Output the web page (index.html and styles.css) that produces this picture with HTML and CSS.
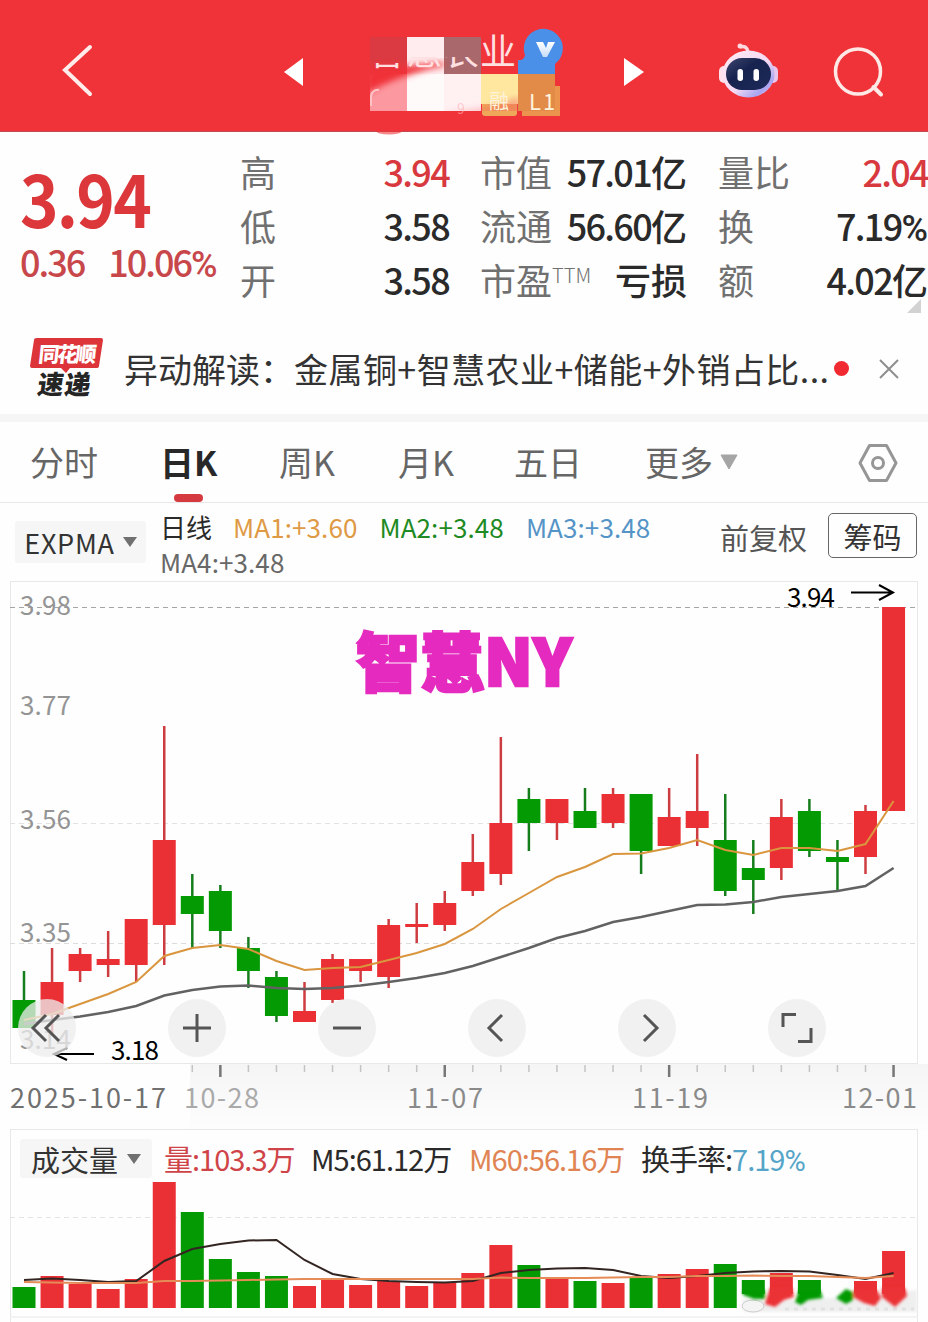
FILE: index.html
```
<!DOCTYPE html>
<html lang="zh-CN">
<head>
    <meta charset="UTF-8">
    <meta name="viewport" content="width=device-width, initial-scale=1.0">
    <title>智慧农业 日K</title>
    <link rel="stylesheet" href="styles.css">
</head>
<body>
    <header class="topbar">
        <svg class="back" width="34" height="56" viewBox="60 42 34 56"><path d="M90 47 L65 70 L90 94" fill="none" stroke="#ffeceb" stroke-width="4" stroke-linecap="round"/></svg>
        <svg class="prev" width="20" height="30" viewBox="0 0 20 30"><path d="M19 1 V29 L0 15 Z" fill="#fff"/></svg>
        <svg class="stock-name" width="206" height="112" viewBox="364 24 206 112">
            <defs>
                <filter id="soft"><feGaussianBlur stdDeviation="3"/></filter>
                <linearGradient id="fade" x1="0" y1="0" x2="0" y2="1">
                    <stop offset="0" stop-color="#fff"/>
                    <stop offset="1" stop-color="#fff" stop-opacity=".7"/>
                </linearGradient>
                <clipPath id="tiles"><rect x="370" y="37" width="148" height="74"/></clipPath>
                <clipPath id="nameBottom"><path d="M364 63H405V57H479V30H520V72H364Z"/></clipPath>
            </defs>
            <ellipse cx="389" cy="131" rx="13" ry="3.500" fill="#f03339" opacity=".6"/>
            <rect x="370" y="37" width="37" height="37" fill="#dc3a42"/>
            <rect x="407" y="37" width="37" height="37" fill="#feecee"/>
            <rect x="444" y="37" width="37" height="37" fill="#a9686b"/>
            <rect x="370" y="74" width="37" height="37" fill="#fc99a0"/>
            <rect x="407" y="74" width="37" height="37" fill="#fffafa"/>
            <rect x="444" y="74" width="37" height="37" fill="#fff0f2"/>
            <rect x="482" y="86" width="35" height="30" rx="3" fill="#efa75a"/>
            <rect x="481" y="74" width="37" height="30" fill="#ffe7a0"/>
            <rect x="522" y="86" width="38" height="30" fill="#ec944d"/>
            <rect x="518" y="74" width="37" height="37" fill="#e28b49"/>
            <g clip-path="url(#tiles)">
                <path d="M366 66 H404 L444 62 V66 C420 70 390 80 366 94 Z" fill="#f03339" filter="url(#soft)"/>
                <path d="M440 114 H520 V96 L505 102 L480 109 Z" fill="#f2545a" opacity=".4" filter="url(#soft)"/>
            </g>
            <path d="M371 106V96q2-7 8-6" fill="none" stroke="#ffc2c4" stroke-width="2"/>
            <text x="369" y="65" class="title" clip-path="url(#nameBottom)" textLength="147">智慧农业</text>
            <text x="489" y="109" class="tag">融</text>
            <text x="529" y="110" class="tag level">L1</text>
            <text x="457" y="114" class="tag faint">9</text>
            <path d="M518 74V60q6 1 7-5a19.500 19.500 0 1 1 30 9v10Z" fill="#4a90e8"/>
            <path d="M536 42h7l3 6 2-6h7l-8 15h-4Z" fill="url(#fade)"/>
        </svg>
        <svg class="next" width="20" height="30" viewBox="0 0 20 30"><path d="M0 1 V29 L20 15 Z" fill="#fff"/></svg>
        <svg class="robot" width="62" height="58" viewBox="717 42 62 58">
            <defs>
                <linearGradient id="shell" x1="0" y1="0" x2="1" y2="1">
                    <stop offset="0" stop-color="#ffeaf4"/>
                    <stop offset=".55" stop-color="#f4d9f3"/>
                    <stop offset=".8" stop-color="#a7a5f2"/>
                    <stop offset="1" stop-color="#f5c9ea"/>
                </linearGradient>
                <linearGradient id="visor" x1="0" y1="0" x2="1" y2="1">
                    <stop offset="0" stop-color="#3d4670"/>
                    <stop offset=".4" stop-color="#17234e"/>
                    <stop offset="1" stop-color="#1d2a59"/>
                </linearGradient>
            </defs>
            <path d="M740 47 Q747 45 748 52" fill="none" stroke="#ffd9dd" stroke-width="3.500"/>
            <circle cx="740" cy="46" r="2.500" fill="#ffd9dd"/>
            <rect x="719" y="66" width="10" height="17" rx="5" fill="#ffe1ec"/>
            <rect x="768" y="66" width="10" height="17" rx="5" fill="#e9c5ee"/>
            <ellipse cx="748.500" cy="74" rx="26" ry="23.500" fill="url(#shell)"/>
            <rect x="726" y="58" width="45" height="32" rx="16" fill="url(#visor)"/>
            <rect x="737.500" y="69" width="5.500" height="12" rx="2.700" fill="#fff"/>
            <rect x="753.500" y="69" width="5.500" height="12" rx="2.700" fill="#fff"/>
        </svg>
        <svg class="search" width="52" height="52" viewBox="833 46 52 52"><circle cx="858" cy="71.500" r="22.500" fill="none" stroke="#ffe9e6" stroke-width="3.500"/><path d="M873.500 87 L881 94.500" stroke="#ffe9e6" stroke-width="4" stroke-linecap="round"/></svg>
    </header>

    <section class="quote">
        <div class="price">
            <div class="last">3.94</div>
            <div class="change"><span>0.36</span><span>10.06<i class="pct">%</i></span></div>
        </div>
        <dl class="col high-low">
            <dt>高</dt><dd class="up">3.94</dd>
            <dt>低</dt><dd>3.58</dd>
            <dt>开</dt><dd>3.58</dd>
        </dl>
        <dl class="col cap">
            <dt>市值</dt><dd>57.01<i>亿</i></dd>
            <dt>流通</dt><dd>56.60<i>亿</i></dd>
            <dt>市盈<sup>TTM</sup></dt><dd><i>亏损</i></dd>
        </dl>
        <dl class="col turnover">
            <dt>量比</dt><dd class="up">2.04</dd>
            <dt>换</dt><dd>7.19<i class="pct">%</i></dd>
            <dt>额</dt><dd>4.02<i>亿</i></dd>
        </dl>
        <span class="expand"></span>
    </section>

    <section class="news">
        <svg class="news-logo" width="76" height="64" viewBox="28 336 76 64">
            <path d="M37 339 H101 q2 0 2 2 L99 367 q0 2-3 2 H70 l-4 5 -5-5 H32 q-2 0-2-2 L34 341 q0-2 3-2Z" fill="#dd3439"/>
            <text x="37" y="363" textLength="58" class="logo-top" transform="skewX(-6) translate(39 0)">同花顺</text>
            <text x="37" y="395" textLength="53" class="logo-bottom" transform="skewX(-8) translate(55 0)">速递</text>
        </svg>
        <p class="headline">异动解读：<span>金属铜+智慧农业+储能+外销占比...</span></p>
        <span class="dot"></span>
        <svg class="close" width="20" height="20" viewBox="0 0 20 20"><path d="M1 1 L19 19 M19 1 L1 19" stroke="#8e8e8e" stroke-width="2"/></svg>
    </section>

    <nav class="tabs">
        <a>分时</a>
        <a class="active">日K</a>
        <a>周K</a>
        <a>月K</a>
        <a>五日</a>
        <a class="more">更多<svg width="18" height="16" viewBox="0 0 18 16"><path d="M1 1H17L9 15Z" fill="#a5a5a5" stroke="#a5a5a5" stroke-linejoin="round"/></svg></a>
        <svg class="settings" width="40" height="40" viewBox="0 0 40 40" fill="none" stroke="#969696" stroke-width="3"><path d="M11.500 2.500 H28.500 L38 20 L28.500 37.500 H11.500 L2 20 Z" stroke-linejoin="round"/><circle cx="20" cy="20" r="5.500"/></svg>
    </nav>

    <section class="indicator">
        <button class="select">EXPMA<b class="caret"></b></button>
        <div class="ma">
            <div><span class="day">日线</span><span class="ma1">MA1:+3.60</span><span class="ma2">MA2:+3.48</span><span class="ma3">MA3:+3.48</span></div>
            <div><span class="ma4">MA4:+3.48</span></div>
        </div>
        <span class="adjust">前复权</span>
        <button class="chips">筹码</button>
    </section>

    <section class="kline">
        <svg id="kline" width="928" height="548" viewBox="0 582 928 548"></svg>
        <div class="controls">
            <button><svg viewBox="0 0 58 58"><path d="M28 16 L15 29 L28 42 M41 16 L28 29 L41 42"/></svg></button>
            <button><svg viewBox="0 0 58 58"><path d="M15 29 H43 M29 15 V43"/></svg></button>
            <button><svg viewBox="0 0 58 58"><path d="M15 29 H43"/></svg></button>
            <button><svg viewBox="0 0 58 58"><path d="M34 16 L21 29 L34 42"/></svg></button>
            <button><svg viewBox="0 0 58 58"><path d="M26 16 L39 29 L26 42"/></svg></button>
            <button><svg viewBox="0 0 58 58"><path d="M15 28 V15.500 H28 M43 29 V42.500 H30"/></svg></button>
        </div>
    </section>

    <section class="volume">
        <div class="volume-head">
            <button class="select">成交量<b class="caret"></b></button>
            <span class="vol">量:103.3万</span>
            <span class="m5">M5:61.12万</span>
            <span class="m60">M60:56.16万</span>
            <span class="rate">换手率:<em>7.19<i class="pct">%</i></em></span>
        </div>
        <svg id="volume" width="928" height="192" viewBox="0 1130 928 192"></svg>
    </section>

    <script src="chart.js"></script>
</body>
</html>
```

FILE: styles.css
```
* {
    box-sizing: border-box;
}
body {
    margin: 0;
    width: 928px;
    height: 1322px;
    overflow: hidden;
    background: #fefefe;
    color: #2a2a2a;
    font-family: "Noto Sans CJK SC", sans-serif;
}
svg {
    display: block;
    flex: none;
    overflow: visible;
}
button {
    border: none;
    padding: 0;
    font-family: inherit;
    color: inherit;
}
i, em {
    font-style: normal;
}
.pct {
    font-family: Roboto, sans-serif;
}

/* header */
.topbar {
    display: flex;
    align-items: flex-start;
    height: 132px;
    background: #f03339;
    border-bottom: 1px solid #c04a50;
}
.back {
    margin: 42px 0 0 60px;
}
.prev {
    margin: 57px 0 0 190px;
}
.stock-name {
    margin: 24px 0 0 60px;
}
.next {
    margin: 57px 0 0 54px;
}
.robot {
    margin: 42px 0 0 73px;
}
.search {
    margin: 46px 0 0 54px;
}
.title {
    font-size: 36px;
    fill: #ffdfe0;
}
.tag {
    font-size: 20px;
    fill: #fff3dc;
}
.level {
    font-size: 22px;
    letter-spacing: 2px;
}
.faint {
    fill: #ffb3b6;
    opacity: .6;
    font-size: 14px;
}

/* quote */
.quote {
    position: relative;
    display: flex;
    height: 188px;
    padding-top: 12px;
}
.price {
    width: 240px;
    padding-left: 20px;
    color: #dc373b;
}
.last {
    height: 86px;
    margin-top: 10px;
    font-size: 72px;
    line-height: 86px;
    font-weight: 700;
    letter-spacing: -2px;
    transform: scaleX(.91);
    transform-origin: left;
}
.change {
    display: flex;
    gap: 24px;
    height: 40px;
    margin-top: 1px;
    font-size: 36px;
    line-height: 40px;
    font-weight: 500;
    letter-spacing: -2px;
    color: #c8474b;
}
.col {
    display: grid;
    grid-template-columns: auto 1fr;
    grid-auto-rows: 54px;
    margin: 0;
    font-size: 36px;
    line-height: 54px;
    white-space: nowrap;
}
.high-low {
    width: 209px;
}
.cap {
    width: 207px;
    margin-left: 31px;
}
.turnover {
    width: 210px;
    margin-left: 31px;
}
dt {
    color: #707070;
}
dt sup {
    margin-right: -40px;
    font-size: 20px;
    font-weight: 300;
    line-height: 0;
    vertical-align: 12px;
}
dd {
    margin: 0;
    text-align: right;
    font-weight: 500;
    letter-spacing: -1.7px;
}
dd i {
    letter-spacing: 0;
}
.up {
    color: #d8393e;
}
.expand {
    position: absolute;
    right: 7px;
    bottom: 7px;
    border-left: 14px solid transparent;
    border-bottom: 14px solid #d2d2d2;
}

/* news */
.news {
    display: flex;
    align-items: center;
    height: 102px;
    padding: 3px 0 0 28px;
    border-bottom: 8px solid #f6f6f6;
}
.news-logo {
    margin-bottom: 4px;
}
.logo-top {
    font-size: 21px;
    font-weight: 900;
    fill: #fff;
}
.logo-bottom {
    font-size: 26px;
    font-weight: 900;
    fill: #252525;
}
.headline {
    width: 710px;
    margin: 0 0 0 20px;
    font-size: 34px;
    white-space: nowrap;
    color: #333;
}
.headline span {
    letter-spacing: .45px;
}
.dot {
    width: 15px;
    height: 15px;
    border-radius: 50%;
    background: #f02a30;
}
.close {
    margin-left: 30px;
}

/* tabs */
.tabs {
    position: relative;
    display: flex;
    height: 81px;
    padding-left: 30px;
    border-bottom: 1px solid #e8e8e8;
    font-size: 34px;
    line-height: 80px;
    color: #666;
}
.tabs a {
    position: relative;
    margin-right: 49px;
    white-space: nowrap;
}
.tabs a:first-child {
    margin-right: 62px;
}
.tabs a:nth-child(2),
.tabs a:nth-child(3) {
    width: 70px;
}
.tabs a:nth-child(4) {
    width: 67px;
}
.tabs .active {
    color: #282828;
    font-weight: 700;
}
.tabs .active::after {
    content: "";
    position: absolute;
    left: 14px;
    bottom: 0;
    width: 29px;
    height: 8px;
    border-radius: 4px;
    background: #d43a3f;
}
.tabs .more {
    display: flex;
    align-items: center;
    gap: 7px;
    margin-left: 14px;
}
.settings {
    margin: 21px 0 0 71px;
}

/* indicator bar */
.indicator {
    display: flex;
    height: 79px;
    padding-left: 15px;
}
.select {
    display: flex;
    align-items: center;
    justify-content: center;
    background: #f6f6f6;
    border-radius: 3px;
    color: #333;
    white-space: nowrap;
}
.indicator .select {
    width: 131px;
    height: 42px;
    margin-top: 18px;
    font-size: 27px;
    letter-spacing: .7px;
    gap: 8px;
}
.caret {
    border: 7px solid transparent;
    border-top: 10px solid #707070;
    border-bottom: 0;
}
.ma {
    width: 574px;
    padding: 6px 0 0 14px;
    font-size: 26px;
    line-height: 35px;
    letter-spacing: .1px;
    white-space: nowrap;
}
.ma span {
    display: inline-block;
}
.ma .day {
    margin-right: 21px;
    letter-spacing: 0;
}
.ma1, .ma2 {
    margin-right: 22px;
}
.ma1 { color: #df9a45; }
.ma2 { color: #1e8a24; }
.ma3 { color: #5594c6; }
.ma4 { color: #686868; }
.adjust {
    width: 108px;
    font-size: 29px;
    line-height: 68px;
    color: #555;
    white-space: nowrap;
}
.chips {
    width: 89px;
    height: 45px;
    margin-top: 10px;
    border: 1px solid #666;
    border-radius: 5px;
    background: none;
    font-size: 29px;
    line-height: 40px;
    color: #333;
}

/* k-line chart */
.kline {
    position: relative;
    height: 548px;
}
.controls {
    position: absolute;
    left: 18px;
    top: 417px;
    display: flex;
    gap: 92px;
}
.controls button {
    width: 58px;
    height: 58px;
    border-radius: 50%;
    background: rgba(236, 236, 236, .76);
}
.controls path {
    fill: none;
    stroke: #555;
    stroke-width: 3;
}
.axis {
    font-size: 26px;
    fill: #949494;
}
.date {
    font-size: 27px;
    fill: #8a8a8a;
}
.date.first {
    fill: #707070;
}
.date.fading {
    fill: #aaa;
}
.mark {
    font-size: 26px;
    fill: #000;
}
.watermark {
    font-size: 64px;
    font-weight: 900;
    fill: #e52bbf;
    stroke: #e52bbf;
    stroke-width: 2.500;
}

/* volume */
.volume {
    position: relative;
    height: 192px;
}
.volume-head {
    position: absolute;
    left: 20px;
    top: 9px;
    display: flex;
    font-size: 29px;
    line-height: 38px;
    letter-spacing: -1px;
    white-space: nowrap;
}
.volume .select {
    width: 132px;
    height: 39px;
    font-size: 29px;
    line-height: 36px;
    gap: 9px;
}
.vol {
    width: 147px;
    margin-left: 12px;
    color: #cf4448;
}
.m5 {
    width: 158px;
}
.m60 {
    width: 172px;
    color: #e08453;
}
.rate em {
    color: #55a5c8;
}
```

FILE: chart.js
```
const RED = '#eb3035';
const GREEN = '#049a04';
const STEP = 28.05;
const FIRST_X = 24;

// direction, high, body top, body bottom, low, volume top
const candles = [
    ['g', 971, 1000, 1028, 1028, 1287],
    ['r', 948, 982, 1015, 1036, 1276],
    ['r', 948, 954, 971, 982, 1284],
    ['r', 931, 959, 965, 977, 1289],
    ['r', 919, 919, 965, 982, 1279],
    ['r', 726, 840, 925, 965, 1182],
    ['g', 874, 896, 914, 948, 1212],
    ['g', 885, 891, 931, 948, 1259],
    ['g', 937, 948, 971, 988, 1272],
    ['g', 971, 977, 1016, 1022, 1276],
    ['r', 982, 1011, 1022, 1022, 1286],
    ['r', 954, 959, 1000, 1003, 1280],
    ['r', 959, 959, 971, 982, 1285],
    ['r', 919, 925, 977, 988, 1281],
    ['r', 903, 924, 927, 943, 1286],
    ['r', 891, 903, 925, 931, 1283],
    ['r', 834, 862, 891, 896, 1273],
    ['r', 737, 823, 874, 885, 1245],
    ['g', 788, 799, 823, 851, 1265],
    ['r', 799, 799, 823, 840, 1279],
    ['g', 788, 811, 828, 828, 1281],
    ['r', 788, 794, 823, 828, 1283],
    ['g', 794, 794, 851, 874, 1278],
    ['r', 788, 817, 846, 846, 1274],
    ['r', 754, 811, 828, 846, 1269],
    ['g', 794, 840, 891, 896, 1264],
    ['g', 840, 868, 880, 914, 1280],
    ['r', 799, 817, 868, 880, 1273],
    ['g', 799, 811, 851, 857, 1280],
    ['g', 840, 857, 862, 892, 1296],
    ['r', 805, 811, 857, 874, 1281],
    ['r', 607, 607, 811, 811, 1251]
];
const fast = [1020, 1014, 1004, 994, 982, 956, 948, 945, 949, 961, 970, 968, 967, 960, 953, 944, 929, 909, 893, 877, 867, 854, 853.5, 848, 840, 850, 855, 848, 848, 851, 844, 801];
const slow = [1024, 1020, 1016.5, 1012, 1006, 995.5, 990, 986.5, 985.5, 988, 989, 988, 985.5, 982, 978, 973, 966, 957, 948, 938, 931, 922, 917, 911, 905, 904.5, 902, 897, 894, 891, 886, 868];
const m5 = [1280, 1278.5, 1280, 1282, 1281, 1261, 1249, 1244, 1240.5, 1240, 1260, 1274, 1279, 1281, 1282, 1282.5, 1281, 1273, 1270, 1268.5, 1268, 1270, 1276, 1278, 1276, 1273, 1271.5, 1271, 1271.5, 1275, 1279, 1273];
const m60 = [1282, 1282.5, 1283, 1283, 1283, 1281, 1281, 1280.5, 1280, 1279.5, 1279, 1279, 1279, 1279, 1279, 1279, 1279, 1277.5, 1278, 1278, 1278, 1277.5, 1277, 1277, 1276, 1276, 1275.5, 1276, 1276, 1277, 1278, 1276];

function xAt(i) {
    return FIRST_X + i * STEP;
}

function line(values, color, width) {
    const points = values.map((y, i) => `${xAt(i).toFixed(1)},${y}`).join(' ');
    return `<polyline points="${points}" fill="none" stroke="${color}" stroke-width="${width}"/>`;
}

function dashed(y, color) {
    return `<path d="M10 ${y}H917" stroke="${color}" stroke-dasharray="5 4"/>`;
}

function text(x, y, width, cls, value) {
    return `<text x="${x}" y="${y}" textLength="${width}" class="${cls}">${value}</text>`;
}

function drawKline() {
    let out = '<defs><linearGradient id="axisBg" x1="0" y1="0" x2="0" y2="1"><stop offset="0" stop-color="#f5f5f5"/><stop offset="1" stop-color="#fdfdfd"/></linearGradient></defs>';
    out += '<rect x="190" y="1064" width="738" height="66" fill="url(#axisBg)"/>';
    out += '<rect x="10.500" y="581.500" width="907" height="482" fill="#fefefe" stroke="#e8e8e8"/>';
    out += dashed(607.5, '#a5a5a5') + dashed(823.5, '#e2e2e2') + dashed(943.5, '#dcdcdc');

    out += text(20, 615, 51, 'axis', '3.98');
    out += text(20, 715, 51, 'axis', '3.77');
    out += text(20, 829, 51, 'axis', '3.56');
    out += text(20, 942, 51, 'axis', '3.35');
    out += text(20, 1049, 51, 'axis', '3.14');

    candles.forEach(([dir, high, top, bottom, low], i) => {
        const color = dir === 'r' ? RED : GREEN;
        const x = xAt(i);
        out += `<path d="M${x} ${high}V${low}" stroke="${dir === 'r' ? '#cd3c40' : '#167d1c'}" stroke-width="2.500"/>`;
        out += `<rect x="${x - 11.5}" y="${top}" width="23" height="${bottom - top}" fill="${color}"/>`;
    });
    out += line(slow, '#626262', 2.5) + line(fast, '#d9963f', 2);

    out += text(787, 607, 48, 'mark', '3.94');
    out += '<path d="M851 592.500H893M879 585L893 592.500L879 600" fill="none" stroke="#000" stroke-width="2"/>';
    out += text(111, 1060, 48, 'mark', '3.18');
    out += '<path d="M94 1054H54M67 1048L54 1054L67 1060" fill="none" stroke="#000" stroke-width="2"/>';
    out += text(356, 686, 216, 'watermark', '智慧NY');

    for (let i = 6; i < 32; i++) {
        const major = i === 7 || i === 15 || i === 23 || i === 31;
        out += `<path d="M${xAt(i)} 1065V${major ? 1077 : 1072}" stroke="${major ? '#777' : '#c4c4c4'}" stroke-width="${major ? 2.5 : 1.5}"/>`;
    }
    out += text(10, 1108, 156, 'date first', '2025-10-17');
    out += text(184, 1108, 75, 'date fading', '10-28');
    out += text(407, 1108, 76, 'date', '11-07');
    out += text(632, 1108, 76, 'date', '11-19');
    out += text(842, 1108, 75, 'date', '12-01');
    document.getElementById('kline').innerHTML = out;
}

function drawVolume() {
    let out = '<defs><filter id="smudge" x="-10%" y="-50%" width="120%" height="200%"><feGaussianBlur stdDeviation="1.500"/></filter></defs>';
    out += '<rect x="10.500" y="1129.500" width="907" height="187.500" fill="#fefefe" stroke="#e8e8e8"/>';
    out += '<path d="M10.500 1318V1322M917.500 1318V1322" stroke="#e8e8e8"/>';
    out += dashed(1217.5, '#e4e4e4');

    // pale strip behind the smudged last bars
    out += '<path d="M742 1299L800 1300L850 1297L917 1290V1312H744Z" fill="#efefef" filter="url(#smudge)"/>';
    out += '<ellipse cx="753" cy="1306" rx="11" ry="6" fill="#f4f4f4" stroke="#ccc"/>';
    out += '<path d="M785 1309H914" stroke="#e2e2e2" stroke-width="3" stroke-dasharray="4 5"/>';

    candles.forEach((c, i) => {
        if (i === 29) {
            return;
        }
        const bottom = i > 25 ? 1294 : 1308;
        out += `<rect x="${xAt(i) - 11.5}" y="${c[5]}" width="23" height="${bottom - c[5]}" fill="${c[0] === 'r' ? RED : GREEN}"/>`;
    });
    out += '<g filter="url(#smudge)">';
    out += `<path d="M743 1290H765V1299H754L743 1295Z M799 1290H820L823 1298L808 1300L801 1305L795 1302Z M836 1298L846 1289L853 1292V1300L846 1304Z" fill="${GREEN}"/>`;
    out += `<path d="M770 1288H792L794 1297L784 1300L775 1307L765 1304L767 1297Z M854 1290H877L881 1298L875 1306L864 1303L853 1297Z M882 1288H905L907 1296L895 1307L882 1297Z" fill="${RED}"/>`;
    out += '</g>';

    out += line(m5, '#332522', 2) + line(m60, '#e58b58', 2);
    document.getElementById('volume').innerHTML = out;
}

drawKline();
drawVolume();
```
